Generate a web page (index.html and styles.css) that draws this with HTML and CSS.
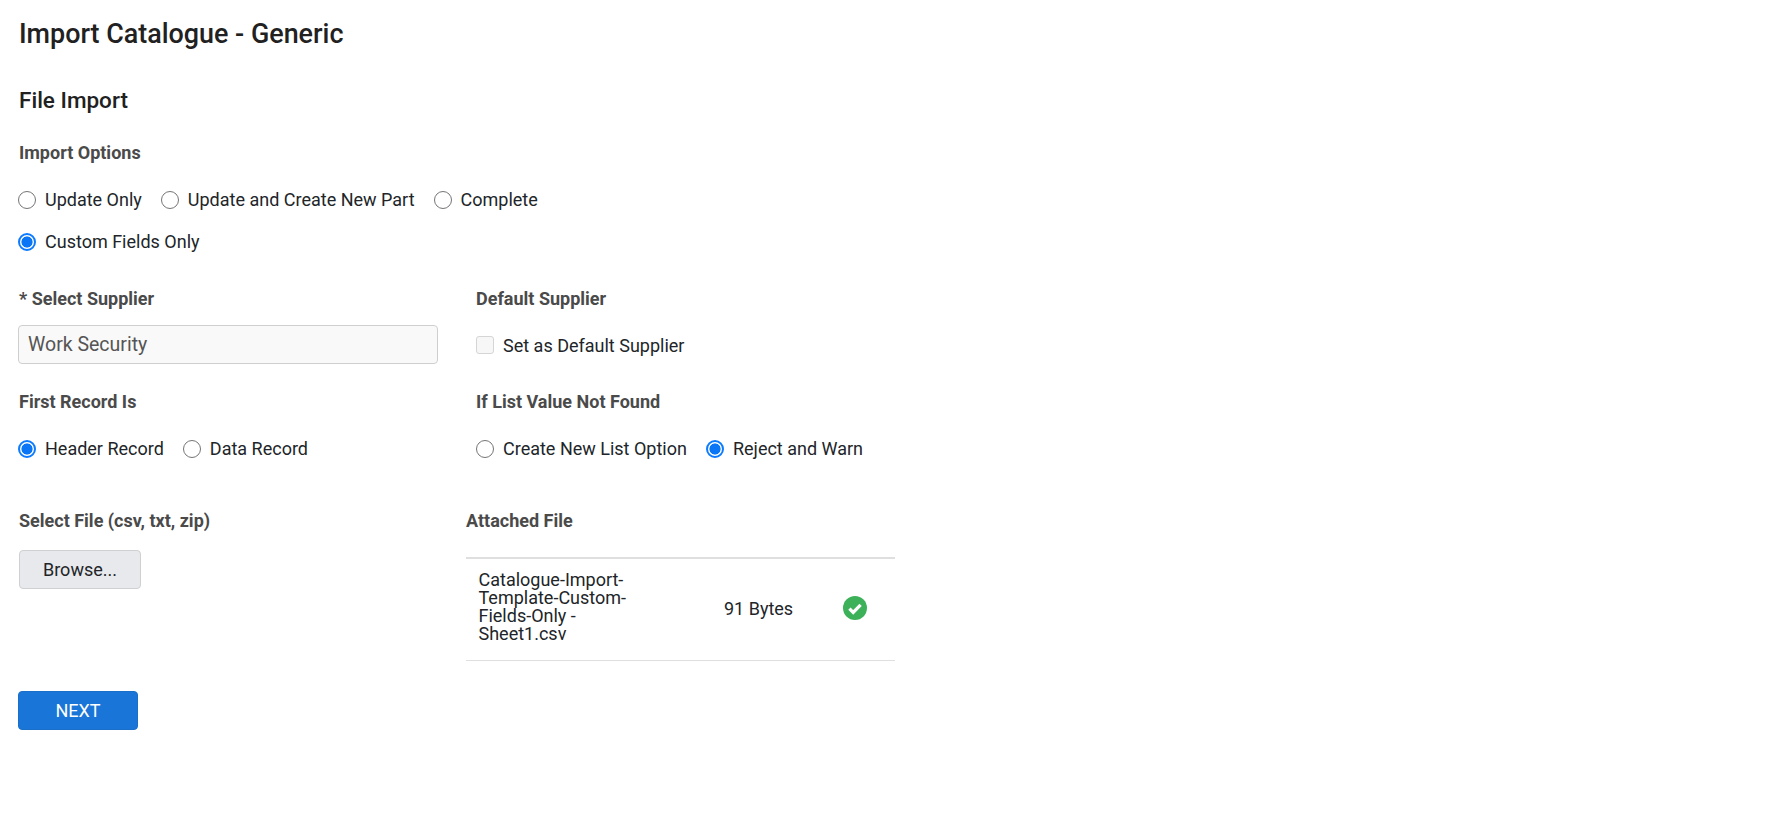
FILE: index.html
```html
<!DOCTYPE html>
<html lang="en">
<head>
<meta charset="utf-8">
<title>Import Catalogue - Generic</title>
<link rel="stylesheet" href="styles.css">
</head>
<body>
<main class="page">
  <h1 class="title">Import Catalogue - Generic</h1>
  <h2 class="subtitle">File Import</h2>
  <div class="label">Import Options</div>
  <div class="radios">
    <label class="opt"><span class="radio"></span>Update Only</label>
    <label class="opt"><span class="radio"></span>Update and Create New Part</label>
    <label class="opt"><span class="radio"></span>Complete</label>
  </div>
  <div class="radios second">
    <label class="opt"><span class="radio on"></span>Custom Fields Only</label>
  </div>

  <div class="two first-two">
    <div class="col-a">
      <div class="label">* Select Supplier</div>
      <div class="input">Work Security</div>
    </div>
    <div class="col-b">
      <div class="label">Default Supplier</div>
      <label class="opt check-row"><span class="check"></span>Set as Default Supplier</label>
    </div>
  </div>

  <div class="two second-two">
    <div class="col-a">
      <div class="label">First Record Is</div>
      <div class="radios tight">
        <label class="opt"><span class="radio on"></span>Header Record</label>
        <label class="opt"><span class="radio"></span>Data Record</label>
      </div>
    </div>
    <div class="col-b">
      <div class="label">If List Value Not Found</div>
      <div class="radios tight">
        <label class="opt"><span class="radio"></span>Create New List Option</label>
        <label class="opt"><span class="radio on"></span>Reject and Warn</label>
      </div>
    </div>
  </div>

  <div class="two third-two">
    <div class="col-a">
      <div class="label">Select File (csv, txt, zip)</div>
      <button class="browse" type="button">Browse...</button>
    </div>
    <div class="col-c">
      <div class="label">Attached File</div>
      <div class="file-row">
        <div class="file-name">Catalogue-Import-Template-Custom-Fields-Only - Sheet1.csv</div>
        <div class="file-size">91 Bytes</div>
        <svg class="ok" viewBox="0 0 24 24" width="24" height="24" aria-hidden="true"><circle cx="12" cy="12" r="12" fill="#3cb15a"/><path d="M6.4 12.6l3.8 3.8 7.4-7.6" fill="none" stroke="#fff" stroke-width="3.2"/></svg>
      </div>
    </div>
  </div>

  <button class="next" type="button">NEXT</button>
</main>
</body>
</html>
```
FILE: styles.css
```css
* { box-sizing: border-box; }
html, body { margin: 0; padding: 0; background: #fff; }
body { font-family: Roboto, "Liberation Sans", sans-serif; color: #212529; font-size: 18px; }
.page { padding: 19px 18px 0 18px; width: 1766px; height: 840px; overflow: hidden; }
.title { margin: 0 0 0 1px; font-size: 26.9px; font-weight: 500; line-height: 30px; color: #212121; }
.subtitle { margin: 36px 0 0 1px; font-size: 22.5px; font-weight: 500; line-height: 30px; color: #212121; }
.label { font-size: 18px; font-weight: 700; line-height: 22px; color: #4a4a4a; margin-left: 1px; }
.col-b > .label, .col-c > .label { margin-left: 0; }
.subtitle + .label { margin-top: 27px; }
.radios { display: flex; gap: 19px; margin-top: 24px; line-height: 24px; height: 24px; }
.radios.second { margin-top: 18px; }
.radios.tight { margin-top: 24px; gap: 19px; }
.opt { display: inline-flex; align-items: center; gap: 9px; font-size: 18px; color: #212529; white-space: nowrap; }
.radio { width: 18px; height: 18px; border-radius: 50%; border: 1.4px solid #757575; background: #fff; flex: none; }
.radio.on { border: 2px solid #0d7bff; background: radial-gradient(circle, #0a75f5 0 5.2px, #fff 5.9px); }
.check { width: 18px; height: 18px; border-radius: 3px; border: 1.5px solid #d5d5d5; background: #f7f7f7; flex: none; }
.two { display: flex; }
.col-a { width: 458px; flex: none; }
.col-b { width: 430px; flex: none; }
.col-c { width: 430px; flex: none; margin-left: -10px; }
.first-two { margin-top: 34px; }
.second-two { margin-top: 27px; }
.third-two { margin-top: 49px; }
.input { width: 420px; height: 39px; margin-top: 15px; border: 1px solid #cfcfcf; border-radius: 4px; background: #f9f9f9; padding: 0 9px; font-size: 19.5px; line-height: 38px; color: #555; }
.check-row { margin-top: 23px; height: 24px; }
.browse { display: block; width: 122px; height: 39px; margin: 18px 0 0 1px; border: 1px solid #cfd0d2; border-radius: 4px; background: #e8e9ec; font: 18px Roboto, sans-serif; color: #212529; padding: 0; }
.file-row { display: flex; align-items: center; margin-top: 25px; padding-bottom: 2px; width: 429px; height: 104px; border-top: 2px solid #dfdfdf; border-bottom: 1px solid #dfdfdf; }
.file-name { width: 160px; margin: 0 0 4px 12.5px; font-size: 18px; line-height: 18px; }
.file-size { margin-left: 85.5px; font-size: 18px; white-space: nowrap; }
.ok { margin: 0 0 1px 50px; flex: none; }
.next { display: block; width: 120px; height: 39px; margin-top: 30px; border: 1px solid #1a6fc9; border-radius: 4px; background: #1976d8; color: #fff; font: 400 18px Roboto, sans-serif; padding: 0; }
```
